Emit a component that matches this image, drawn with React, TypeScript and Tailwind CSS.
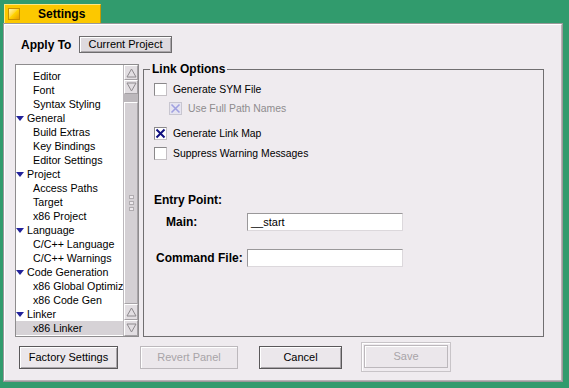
import type { ReactNode } from 'react'

type Row = { label: string; group?: boolean; selected?: boolean }

const rows: Row[] = [
  { label: 'Editor' },
  { label: 'Font' },
  { label: 'Syntax Styling' },
  { label: 'General', group: true },
  { label: 'Build Extras' },
  { label: 'Key Bindings' },
  { label: 'Editor Settings' },
  { label: 'Project', group: true },
  { label: 'Access Paths' },
  { label: 'Target' },
  { label: 'x86 Project' },
  { label: 'Language', group: true },
  { label: 'C/C++ Language' },
  { label: 'C/C++ Warnings' },
  { label: 'Code Generation', group: true },
  { label: 'x86 Global Optimiz' },
  { label: 'x86 Code Gen' },
  { label: 'Linker', group: true },
  { label: 'x86 Linker', selected: true },
]

function Arrow({ up, className }: { up?: boolean; className: string }) {
  return (
    <div className={`flex items-center justify-center bg-[#e2dee2] border border-t-white border-l-white border-r-[#a4a0a4] border-b-[#a4a0a4] ${className}`}>
      <svg width="11" height="10" viewBox="0 0 11 10">
        {up ? (
          <path d="M5.5 1 L10 9 L1 9 Z" fill="none" stroke="#8e8a8e" strokeWidth="1" />
        ) : (
          <path d="M1 1 L10 1 L5.5 9 Z" fill="none" stroke="#8e8a8e" strokeWidth="1" />
        )}
      </svg>
    </div>
  )
}

function Scrollbar() {
  return (
    <div className="w-[15px] h-full flex flex-col bg-[#d4d0d4] border-l border-[#bcb8bc]">
      <Arrow up className="h-[15px]" />
      <Arrow className="h-[14px]" />
      <div className="h-[8px] bg-[#bcb8bc]" />
      <div className="flex-1 flex flex-col items-center justify-center gap-[2px] bg-[#d4d0d4] border border-t-white border-l-white border-r-[#a8a4a8] border-b-[#a8a4a8]">
        {[0, 1, 2].map(i => (
          <div key={i} className="w-[5px] h-[4px] border border-[#b0acb0] bg-[#eeeaee]" />
        ))}
      </div>
      <Arrow up className="h-[16px]" />
      <Arrow className="h-[16px]" />
    </div>
  )
}

function TreeList() {
  return (
    <div className="w-[124px] h-[273px] flex border border-[#8e8c8e] bg-white">
      <div className="w-[107px] pt-[4px] overflow-hidden">
        {rows.map(r => (
          <div
            key={r.label}
            className={`h-[14px] flex items-center whitespace-nowrap text-[10.7px] leading-[14px] text-black ${r.selected ? 'bg-[#d6d2d6]' : ''} ${r.group ? '' : 'pl-[17px]'}`}
          >
            {r.group && (
              <svg width="8" height="5" viewBox="0 0 8 5" className="mr-[3px] shrink-0">
                <path d="M0 0 L8 0 L4 5 Z" fill="#22229a" />
              </svg>
            )}
            {r.label}
          </div>
        ))}
      </div>
      <Scrollbar />
    </div>
  )
}

function Check({ checked, disabled, label, className = '' }: { checked?: boolean; disabled?: boolean; label: string; className?: string }) {
  return (
    <div className={`h-[13px] flex items-center ${className}`}>
      <div
        className={`w-[13px] h-[13px] shrink-0 flex items-center justify-center border ${
          disabled
            ? 'bg-[#e6e4f0] border-[#c8c6d0]'
            : 'bg-white border-t-[#8a888a] border-l-[#8a888a] border-r-[#c4c0c4] border-b-[#c4c0c4]'
        }`}
      >
        {checked && (
          <svg width="11" height="11" viewBox="0 0 11 11">
            <path d="M1.5 1.5 L9.5 9.5 M9.5 1.5 L1.5 9.5" stroke={disabled ? '#a0a0e0' : '#101080'} strokeWidth={disabled ? 1.6 : 2} />
          </svg>
        )}
      </div>
      <span className={`ml-[6px] text-[10.4px] whitespace-nowrap ${disabled ? 'text-[#8e8c8e]' : 'text-black'}`}>{label}</span>
    </div>
  )
}

function Field({ value = '' }: { value?: string }) {
  return (
    <div className="w-[156px] h-[18px] flex items-center pl-[3px] bg-white border border-t-[#9a989a] border-l-[#9a989a] border-r-[#dcd8dc] border-b-[#dcd8dc] text-[11px] text-black">
      {value}
    </div>
  )
}

function Button({ children, disabled, className = '' }: { children: ReactNode; disabled?: boolean; className?: string }) {
  return (
    <div
      className={`h-[23px] flex items-center justify-center text-[11px] bg-[#ebe7eb] border ${
        disabled
          ? 'border-[#bcb8bc] text-[#a8a4a8] shadow-[inset_1px_1px_0_#fff]'
          : 'border-[#5a585a] text-black shadow-[inset_1px_1px_0_#fff,inset_-1px_-1px_0_#aaa6aa]'
      } ${className}`}
    >
      {children}
    </div>
  )
}

export default function App() {
  return (
    <div className="w-[569px] h-[388px] bg-[#319b6d] overflow-hidden flex flex-col font-['Liberation_Sans',Arial,sans-serif]">
      <div className="mt-[4px] ml-[4px] w-[97px] h-[19px] flex items-center bg-[#fcc800] border-t border-l border-t-[#ffe680] border-l-[#ffe680] border-r border-r-[#c89a00]">
        <div className="ml-[3px] w-[12px] h-[12px] border border-[#c89000] bg-gradient-to-br from-[#fff4a0] via-[#ffd400] to-[#e89c00]" />
        <span className="ml-[18px] text-[12px] font-bold text-black">Settings</span>
      </div>

      <div className="ml-[3px] w-[560px] h-[359px] border border-[#9a989a] bg-[#efebef]">
        <div className="h-full flex flex-col border border-t-white border-l-white border-r-[#b6b2b6] border-b-[#b6b2b6]">
          <div className="mt-[11px] h-[17px] flex items-center">
            <span className="ml-[16px] w-[58px] text-[12px] font-bold text-black">Apply To</span>
            <div className="w-[93px] h-[17px] flex items-center justify-center text-[11px] text-black bg-[#dedade] border border-[#6e6c6e] shadow-[inset_1px_1px_0_#fff,inset_-1px_-1px_0_#aaa6aa]">
              Current Project
            </div>
          </div>

          <div className="mt-[11px] flex">
            <div className="ml-[10px]">
              <TreeList />
            </div>
            <div className="relative ml-[4px] mt-[5px] w-[401px] h-[268px] border border-[#706e70]">
              <span className="absolute -top-[8px] left-[6px] px-[2px] bg-[#efebef] text-[12px] leading-[14px] font-bold text-black">
                Link Options
              </span>
              <div className="pl-[10px] pt-[13px] flex flex-col">
                <Check label="Generate SYM File" />
                <Check checked disabled label="Use Full Path Names" className="mt-[6px] ml-[15px]" />
                <Check checked label="Generate Link Map" className="mt-[12px]" />
                <Check label="Suppress Warning Messages" className="mt-[7px]" />

                <div className="mt-[33px] h-[14px] flex items-center text-[12px] font-bold text-black">Entry Point:</div>
                <div className="mt-[6px] flex items-center">
                  <span className="ml-[12px] w-[81px] text-[12px] font-bold text-black">Main:</span>
                  <Field value="__start" />
                </div>
                <div className="mt-[18px] flex items-center">
                  <span className="ml-[2px] w-[91px] text-[12px] font-bold text-black">Command File:</span>
                  <Field />
                </div>
              </div>
            </div>
          </div>

          <div className="mt-[5px] h-[30px] flex items-center">
            <Button className="ml-[14px] w-[99px]">Factory Settings</Button>
            <Button disabled className="ml-[22px] w-[98px]">Revert Panel</Button>
            <Button className="ml-[21px] w-[83px]">Cancel</Button>
            <div className="ml-[19px] w-[90px] h-[30px] p-[2px] border border-[#c8c4c8] shadow-[inset_1px_1px_0_#fff]">
              <Button disabled className="w-full">Save</Button>
            </div>
          </div>
        </div>
      </div>
    </div>
  )
}
